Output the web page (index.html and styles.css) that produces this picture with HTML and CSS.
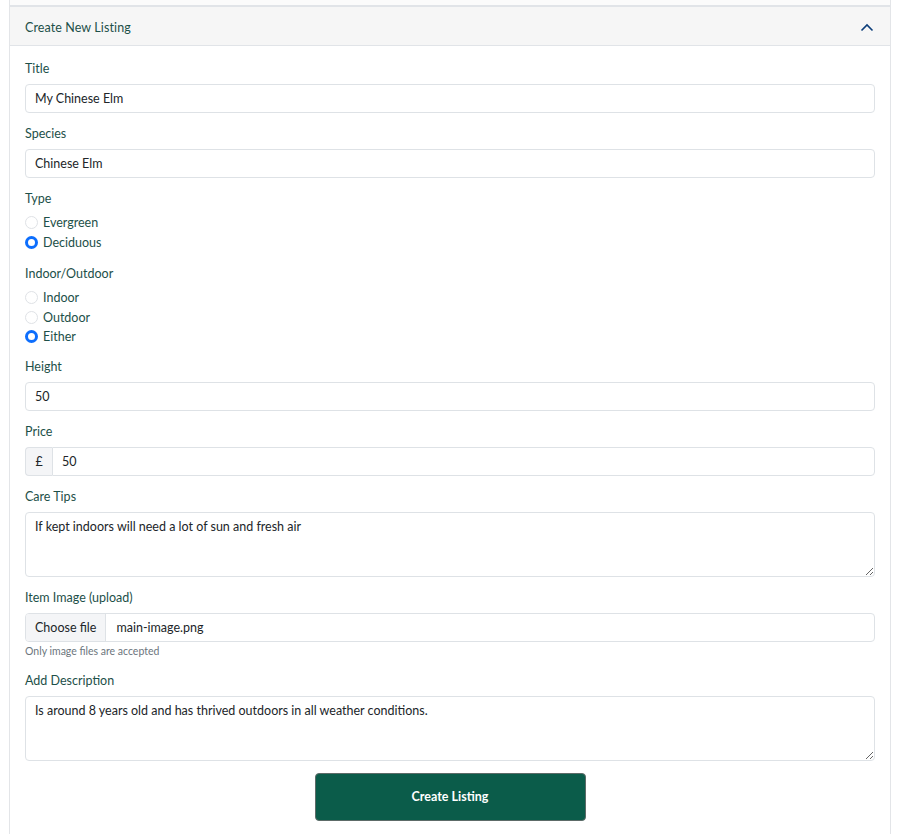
FILE: index.html
```html
<!DOCTYPE html>
<html lang="en">
<head>
<meta charset="utf-8">
<title>Create New Listing</title>
<link rel="stylesheet" href="styles.css">
</head>
<body>
<div class="accordion">
  <div class="top-strip"></div>
  <div class="acc-header">
    <span class="acc-title">Create New Listing</span>
    <svg class="chev" width="14" height="9" viewBox="0 0 14 9"><path d="M1.5 7.5 L7 2 L12.5 7.5" fill="none" stroke="#0c3e7a" stroke-width="1.6"/></svg>
  </div>
  <form class="acc-body">
    <div class="group">
      <label class="lbl">Title</label>
      <input class="field" type="text" value="My Chinese Elm">
    </div>
    <div class="group">
      <label class="lbl">Species</label>
      <input class="field" type="text" value="Chinese Elm">
    </div>
    <div class="group radios">
      <label class="lbl">Type</label>
      <div class="radio-row"><span class="radio"></span><span>Evergreen</span></div>
      <div class="radio-row"><span class="radio on"></span><span>Deciduous</span></div>
    </div>
    <div class="group radios">
      <label class="lbl">Indoor/Outdoor</label>
      <div class="radio-row"><span class="radio"></span><span>Indoor</span></div>
      <div class="radio-row"><span class="radio"></span><span>Outdoor</span></div>
      <div class="radio-row"><span class="radio on"></span><span>Either</span></div>
    </div>
    <div class="group">
      <label class="lbl">Height</label>
      <input class="field" type="text" value="50">
    </div>
    <div class="group">
      <label class="lbl">Price</label>
      <div class="input-group">
        <span class="addon">£</span>
        <input class="field joined" type="text" value="50">
      </div>
    </div>
    <div class="group">
      <label class="lbl">Care Tips</label>
      <textarea class="field area">If kept indoors will need a lot of sun and fresh air</textarea>
    </div>
    <div class="group file-group">
      <label class="lbl">Item Image (upload)</label>
      <div class="file">
        <span class="file-btn">Choose file</span>
        <span class="file-name">main-image.png</span>
      </div>
      <div class="help">Only image files are accepted</div>
    </div>
    <div class="group">
      <label class="lbl">Add Description</label>
      <textarea class="field area">Is around 8 years old and has thrived outdoors in all weather conditions.</textarea>
    </div>
    <div class="actions">
      <button type="button" class="btn">Create Listing</button>
    </div>
  </form>
</div>
</body>
</html>
```

FILE: styles.css
```css
* { box-sizing: border-box; }
html, body { margin: 0; padding: 0; background: #ffffff; }
body {
  font-family: "Lato", "Noto Sans", sans-serif;
  font-size: 12.5px;
  color: #212529;
}
.accordion {
  margin-left: 9px;
  width: 882px;
  min-height: 834px;
  border-left: 1px solid #e3e5e8;
  border-right: 1px solid #e3e5e8;
}
.top-strip {
  height: 7px;
  background: #fbfbfb;
  border-bottom: 2px solid #e1e4e8;
}
.acc-header {
  height: 39px;
  background: #f6f6f6;
  border-bottom: 1px solid #e1e4e8;
  display: flex;
  align-items: center;
  justify-content: space-between;
  padding: 2px 16px 0 15px;
}
.acc-title {
  font-size: 12.5px;
  color: #1d5049;
  letter-spacing: 0.1px;
}
.acc-body {
  padding: 14px 15px 0 15px;
  display: flex;
  flex-direction: column;
}
.group {
  display: flex;
  flex-direction: column;
  margin-bottom: 12px;
}
.lbl {
  font-size: 12.5px;
  line-height: 18px;
  color: #1d5049;
  margin-bottom: 6px;
}
.field {
  font-family: inherit;
  font-size: 12.5px;
  color: #212529;
  height: 29px;
  width: 100%;
  border: 1px solid #dee2e6;
  border-radius: 4px;
  padding: 0 9px;
  background: #fff;
  outline: none;
}
.input-group {
  display: flex;
}
.addon {
  width: 27px;
  height: 29px;
  flex: none;
  display: flex;
  align-items: center;
  justify-content: center;
  background: #f4f5f7;
  border: 1px solid #dee2e6;
  border-right: none;
  border-radius: 4px 0 0 4px;
  font-size: 12.5px;
}
.field.joined {
  border-radius: 0 4px 4px 0;
  padding-left: 9px;
}
.field.area {
  height: 65px;
  padding: 5px 9px;
  resize: vertical;
  line-height: 17px;
}
.radios .lbl { margin-bottom: 5px; }
.radios { margin-bottom: 13px; }
.radios + .radios { margin-bottom: 11px; }
.radio-row {
  display: flex;
  align-items: center;
  height: 19.5px;
  color: #1d5049;
}
.radio {
  width: 13px;
  height: 13px;
  border-radius: 50%;
  border: 1px solid #dfe2e6;
  background: #fff;
  margin-right: 5px;
  flex: none;
}
.radio.on {
  border: 3.5px solid #0d6efd;
  background: #fff;
}
.file-group { margin-bottom: 14px; }
.file {
  display: flex;
  height: 29px;
  border: 1px solid #dee2e6;
  border-radius: 4px;
  overflow: hidden;
}
.file-btn {
  display: flex;
  align-items: center;
  padding: 0 9px;
  background: #f4f5f7;
  border-right: 1px solid #dee2e6;
  color: #212529;
}
.file-name {
  display: flex;
  align-items: center;
  padding-left: 10px;
}
.help {
  font-size: 10.5px;
  color: #6c757d;
  margin-top: 3px;
  line-height: 13px;
}
.actions {
  display: flex;
  justify-content: center;
  margin-top: 0;
}
.btn {
  width: 271px;
  height: 48px;
  background: #0b5c4a;
  border: 1px solid #5d6b68;
  border-radius: 4px;
  color: #ffffff;
  font-family: inherit;
  font-size: 12.5px;
  font-weight: 700;
}
```
